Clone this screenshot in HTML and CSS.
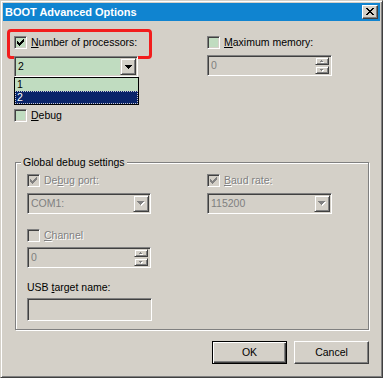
FILE: index.html
```html
<!DOCTYPE html>
<html>
<head>
<meta charset="utf-8">
<link rel="stylesheet" href="styles.css">
</head>
<body>
<div class="win">
  <div class="titlebar">
    <span class="title">BOOT Advanced Options</span>
    <span class="close"><svg width="8" height="7" viewBox="0 0 8 7"><path fill="#000" d="M0 0h2v1H0zM6 0h2v1H6zM1 1h2v1H1zM5 1h2v1H5zM2 2h4v1H2zM3 3h2v1H3zM2 4h4v1H2zM1 5h2v1H1zM5 5h2v1H5zM0 6h2v1H0zM6 6h2v1H6z"/></svg></span>
  </div>
  <div class="content">
    <div class="top">
      <div class="col">
        <div class="chk-row hl">
          <span class="chk green"><svg width="7" height="7" viewBox="0 0 7 7"><path fill="#000" d="M6 0h1v1H6zM5 1h2v1H5zM0 2h1v1H0zM4 2h3v1H4zM0 3h2v1H0zM3 3h3v1H3zM0 4h5v1H0zM1 5h3v1H1zM2 6h1v1H2z"/></svg></span>
          <span class="lbl"><u>N</u>umber of processors:</span>
        </div>
        <div class="combo-wrap">
          <div class="field combo green">
            <span class="val">2</span>
            <span class="dd"><svg width="7" height="4" viewBox="0 0 7 4"><path fill="#000" d="M0 0h7v1H0zM1 1h5v1H1zM2 2h3v1H2zM3 3h1v1H3z"/></svg></span>
          </div>
          <div class="droplist">
            <div class="item">1</div>
            <div class="item sel">2</div>
          </div>
        </div>
        <div class="chk-row debug">
          <span class="chk green"></span>
          <span class="lbl"><u>D</u>ebug</span>
        </div>
      </div>
      <div class="col">
        <div class="chk-row">
          <span class="chk green"></span>
          <span class="lbl"><u>M</u>aximum memory:</span>
        </div>
        <div class="field spin dis mem">
          <span class="val">0</span>
          <span class="spinbtns">
            <span class="sb"><svg width="4" height="3" viewBox="0 0 4 3"><path fill="#fff" d="M2 1h1v1H2zM1 2h3v1H1z"/><path fill="#808080" d="M1 0h1v1H1zM0 1h3v1H0z"/></svg></span>
            <span class="sb"><svg width="4" height="3" viewBox="0 0 4 3"><path fill="#fff" d="M1 1h3v1H1zM2 2h1v1H2z"/><path fill="#808080" d="M0 0h3v1H0zM1 1h1v1H1z"/></svg></span>
          </span>
        </div>
      </div>
    </div>

    <div class="group">
      <div class="legend">Global debug settings</div>
      <div class="gcols">
        <div class="chk-row">
          <span class="chk"><svg width="7" height="7" viewBox="0 0 7 7"><path fill="#808080" d="M6 0h1v1H6zM5 1h2v1H5zM0 2h1v1H0zM4 2h3v1H4zM0 3h2v1H0zM3 3h3v1H3zM0 4h5v1H0zM1 5h3v1H1zM2 6h1v1H2z"/></svg></span>
          <span class="lbl dis-text">De<u>b</u>ug port:</span>
        </div>
        <div class="chk-row">
          <span class="chk"><svg width="7" height="7" viewBox="0 0 7 7"><path fill="#808080" d="M6 0h1v1H6zM5 1h2v1H5zM0 2h1v1H0zM4 2h3v1H4zM0 3h2v1H0zM3 3h3v1H3zM0 4h5v1H0zM1 5h3v1H1zM2 6h1v1H2z"/></svg></span>
          <span class="lbl dis-text"><u>B</u>aud rate:</span>
        </div>
        <div class="field combo dis gcombo">
          <span class="val">COM1:</span>
          <span class="dd"><svg width="8" height="5" viewBox="0 0 8 5"><path fill="#fff" d="M1 1h7v1H1zM2 2h5v1H2zM3 3h3v1H3zM4 4h1v1H4z"/><path fill="#808080" d="M0 0h7v1H0zM1 1h5v1H1zM2 2h3v1H2zM3 3h1v1H3z"/></svg></span>
        </div>
        <div class="field combo dis gcombo">
          <span class="val">115200</span>
          <span class="dd"><svg width="8" height="5" viewBox="0 0 8 5"><path fill="#fff" d="M1 1h7v1H1zM2 2h5v1H2zM3 3h3v1H3zM4 4h1v1H4z"/><path fill="#808080" d="M0 0h7v1H0zM1 1h5v1H1zM2 2h3v1H2zM3 3h1v1H3z"/></svg></span>
        </div>
      </div>
      <div class="gleft">
        <div class="chk-row channel">
          <span class="chk"></span>
          <span class="lbl dis-text"><u>C</u>hannel</span>
        </div>
        <div class="field spin dis chspin">
          <span class="val">0</span>
          <span class="spinbtns">
            <span class="sb"><svg width="4" height="3" viewBox="0 0 4 3"><path fill="#fff" d="M2 1h1v1H2zM1 2h3v1H1z"/><path fill="#808080" d="M1 0h1v1H1zM0 1h3v1H0z"/></svg></span>
            <span class="sb"><svg width="4" height="3" viewBox="0 0 4 3"><path fill="#fff" d="M1 1h3v1H1zM2 2h1v1H2z"/><path fill="#808080" d="M0 0h3v1H0zM1 1h1v1H1z"/></svg></span>
          </span>
        </div>
        <div class="usb-label">USB <u>t</u>arget name:</div>
        <div class="field textbox dis"></div>
      </div>
    </div>

    <div class="buttons">
      <div class="btn default">OK</div>
      <div class="btn">Cancel</div>
    </div>
  </div>
</div>
</body>
</html>
```
FILE: styles.css
```css
* { box-sizing: border-box; margin: 0; padding: 0; }
body {
  margin: 0;
  background: #d4d0c8;
  font-family: "Liberation Sans", Arial, sans-serif;
  font-size: 10.5px;
  color: #000;
}
u { text-decoration: underline; text-underline-offset: 1px; }

.win {
  width: 383px;
  height: 378px;
  border: 1px solid;
  border-color: #d4d0c8 #404040 #404040 #d4d0c8;
  box-shadow: inset 1px 1px #fff, inset -1px -1px #808080;
  padding: 2px;
  background: #d4d0c8;
  display: flex;
  flex-direction: column;
}

.titlebar {
  height: 18px;
  flex: none;
  background: #1084d0;
  display: flex;
  align-items: center;
  justify-content: space-between;
  padding: 0 2px;
  color: #fff;
  font-weight: bold;
  font-size: 11px;
}
.close {
  width: 16px;
  height: 14px;
  background: #d4d0c8;
  border: 1px solid;
  border-color: #fff #404040 #404040 #fff;
  box-shadow: inset -1px -1px #808080;
  display: flex;
  align-items: center;
  justify-content: center;
  padding: 1px 2px 2px 1px;
}
.close svg { display: block; }

.content {
  padding: 15px 11px 0 11px;
  display: flex;
  flex-direction: column;
}

.top {
  display: grid;
  grid-template-columns: 124px 125px;
  column-gap: 69px;
}
.col { display: flex; flex-direction: column; }

.chk-row {
  display: flex;
  align-items: center;
  gap: 4px;
  height: 13px;
  line-height: 13px;
  white-space: nowrap;
  position: relative;
}
.hl::before {
  content: "";
  position: absolute;
  left: -7px;
  top: -7px;
  width: 139px;
  height: 24px;
  border: 3px solid #f21c1c;
  border-radius: 4px;
}
.chk {
  width: 13px;
  height: 13px;
  flex: none;
  border: 1px solid;
  border-color: #808080 #fff #fff #808080;
  box-shadow: inset 1px 1px #404040, inset -1px -1px #d4d0c8;
  background: #d4d0c8;
  display: flex;
  align-items: center;
  justify-content: center;
}
.chk.green { background: #c0dcc0; }
.chk svg { display: block; }
.dis-text { color: #808080; text-shadow: 1px 1px 0 #fff; }

.field {
  height: 21px;
  border: 1px solid;
  border-color: #808080 #fff #fff #808080;
  box-shadow: inset 1px 1px #404040, inset -1px -1px #d4d0c8;
  background: #d4d0c8;
  padding: 1px;
  display: flex;
  align-items: stretch;
}
.field.green { background: #c0dcc0; }
.field .val {
  flex: 1;
  padding-left: 2px;
  line-height: 17px;
}
.field.dis .val { color: #808080; }

.combo-wrap { position: relative; margin-top: 7px; }
.dd {
  width: 16px;
  flex: none;
  background: #d4d0c8;
  border: 1px solid;
  border-color: #d4d0c8 #404040 #404040 #d4d0c8;
  box-shadow: inset 1px 1px #fff, inset -1px -1px #808080;
  display: flex;
  align-items: center;
  justify-content: center;
}
.dd svg { display: block; }

.droplist {
  position: absolute;
  left: 0;
  top: 21px;
  width: 125px;
  border: 1px solid #000;
  background: #c0dcc0;
  z-index: 2;
}
.item {
  height: 13px;
  line-height: 13px;
  padding-left: 2px;
}
.item.sel {
  background: #0a246a;
  color: #fff;
  outline: 1px dotted #c8c8d0;
  outline-offset: -1px;
}
.debug { margin-top: 32px; }

.mem { margin-top: 6px; }
.spinbtns {
  width: 15px;
  flex: none;
  display: flex;
  flex-direction: column;
  gap: 1px;
  padding: 0 1px 0 0;
}
.sb {
  flex: 1;
  background: #d4d0c8;
  border: 1px solid;
  border-color: #d4d0c8 #404040 #404040 #d4d0c8;
  box-shadow: inset 1px 1px #fff, inset -1px -1px #808080;
  display: flex;
  align-items: center;
  justify-content: center;
}
.sb svg { display: block; }

.group {
  margin: 40px 0 0 1px;
  border: 1px solid #808080;
  box-shadow: 1px 1px 0 #fff, inset 1px 1px 0 #fff;
  padding: 0 0 8px 11px;
}
.legend {
  width: max-content;
  margin: -7px 0 0 -6px;
  padding: 0 2px;
  height: 13px;
  line-height: 13px;
  background: #d4d0c8;
}
.gcols {
  margin-top: 5px;
  display: grid;
  grid-template-columns: 124px 125px;
  column-gap: 56px;
  row-gap: 6px;
}
.gleft { width: 124px; display: flex; flex-direction: column; }
.channel { margin-top: 15px; }
.chspin { margin-top: 5px; }
.usb-label { margin-top: 13px; height: 13px; line-height: 13px; }
.textbox { margin-top: 4px; height: 23px; width: 125px; }

.buttons {
  margin-top: 11px;
  display: flex;
  justify-content: flex-end;
  gap: 7px;
}
.btn {
  width: 75px;
  height: 23px;
  line-height: 21px;
  text-align: center;
  border: 1px solid;
  border-color: #fff #404040 #404040 #fff;
  box-shadow: inset -1px -1px #808080;
}
.btn.default {
  border: 1px solid #000;
  box-shadow: inset 1px 1px #fff, inset -1px -1px #404040, inset -2px -2px #808080;
}
```
